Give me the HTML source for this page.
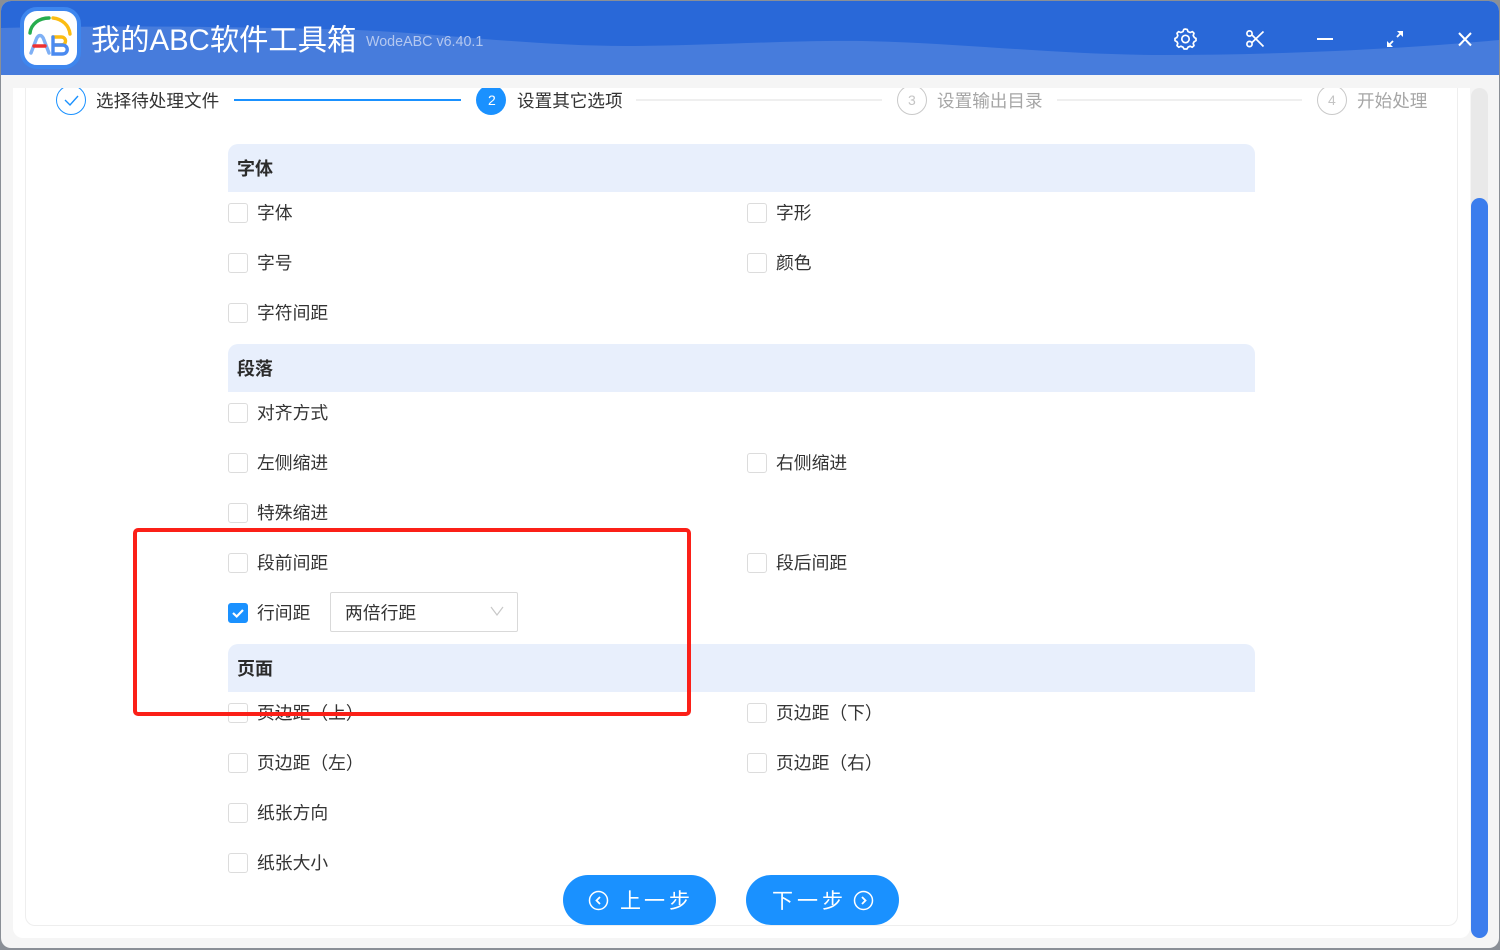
<!DOCTYPE html>
<html lang="zh-CN"><head><meta charset="utf-8"><title>我的ABC软件工具箱</title>
<style>
*{box-sizing:border-box;margin:0;padding:0}
html,body{width:1500px;height:950px;overflow:hidden;background:#8a8f96;font-family:"Liberation Sans","Noto Sans CJK SC",sans-serif;color:#333}
.abs,.t,.cb,.sec{position:absolute}
#win{position:absolute;left:1px;top:1px;width:1498px;height:947px;background:#f5f5f5;border-radius:10px;overflow:hidden}
#card{position:absolute;left:12px;top:87px;width:1457px;height:850px;background:#fff;border-radius:0 0 10px 10px}
#inner{position:absolute;left:25px;top:88px;width:1433px;height:838px;border:1px solid #eee;border-top:none;border-radius:0 0 10px 10px;background:#fff}
#page{position:absolute;left:0;top:0;width:1500px;height:950px}
.t{font-size:17.8px;line-height:24px;white-space:nowrap;color:#333}
.s{font-size:17.6px}
.g{color:#a6a6a6}
.n{font-size:14px;color:#c4c4c4}
.cb{width:20px;height:20px;border:1px solid #dcdcdc;border-radius:3px;background:#fff}
.sec{left:228px;width:1027px;height:48px;background:#e8effc;border-radius:10px 10px 0 0;font-size:18px;font-weight:bold;line-height:51px;padding-left:9px;color:#2b2b2b}
.line{position:absolute;height:2px;top:99px}
.btn{position:absolute;top:875px;width:153px;height:50px;border-radius:25px;background:#1a91ff;color:#fff;font-size:21px;line-height:53px;white-space:nowrap}
</style></head><body>
<div id="win">
 <svg class="abs" style="left:0;top:0" width="1498" height="74" viewBox="0 0 1498 74">
  <rect width="1498" height="74" fill="#2968d8"/>
  <path d="M0 27C120 24 260 26 356 29C450 33 530 45 626 45C700 45 790 39 862 40C960 42 1060 54 1161 54C1280 54 1400 48 1498 39V74H0Z" fill="#477cdc"/>
 </svg>
 <div id="card"></div>
</div>
<div id="inner"></div>
<div id="page">
 <!-- logo -->
 <div class="abs" style="left:20px;top:7px;width:61px;height:62px;border-radius:17px;background:#fff;border:4px solid #3e86ee"></div>
 <svg class="abs" style="left:20px;top:7px" width="61" height="62" viewBox="0 0 61 62" fill="none" stroke-linecap="round">
  <path d="M10 26C11 17 19 11 29 11" stroke="#27ad4e" stroke-width="3.400"/>
  <path d="M33 11C42 12 49 18 50 27" stroke="#fbbc12" stroke-width="3.400"/>
  <path d="M11 46L16 33C18 27 22 27 24 33L29 46" stroke="#7fb0f5" stroke-width="3.400"/>
  <path d="M14 39H25" stroke="#ee3030" stroke-width="3.400"/>
  <path d="M33 30H41C47 30 47 38 41 38H34" stroke="#fbbc12" stroke-width="3.400"/>
  <path d="M33 30V47H42C49 47 49 38 42 38H34" stroke="#4a8af0" stroke-width="3.400"/>
 </svg>
 <div class="t" style="left:91px;top:21px;font-size:29.300px;line-height:40px;color:#fff">我的ABC软件工具箱</div>
 <div class="t" style="left:366px;top:31px;font-size:14.300px;line-height:22px;color:#b4c8f0">WodeABC v6.40.1</div>
 <!-- window icons -->
 <svg class="abs" style="left:1170px;top:24px" width="310" height="30" viewBox="0 0 310 30" fill="none" stroke="#fff" stroke-width="1.700">
  <path d="M15 6L17.200 6.400L18 8.600L20.200 9.500L22.400 8.600L24 10.200L23.200 12.600L24.400 14.600L26 15.400V17.600L24.200 18.600L23.200 20.400L24 22.600L22.200 24.200L20.200 23.200L18 24.200L17 26H14L13 24.200L10.800 23.200L8.800 24.200L7 22.600L7.800 20.400L6.800 18.600L5 17.600V15.400L6.800 14.600L7.800 12.600L7 10.200L8.600 8.600L10.800 9.500L13 8.600L13.800 6.400Z" transform="translate(0,-1)" stroke-linejoin="round"/>
  <circle cx="15.500" cy="15" r="3.700"/>
  <circle cx="79.500" cy="9.500" r="2.600"/><circle cx="79.500" cy="20" r="2.600"/>
  <path d="M82 11L93.500 22.500M82 18.500L93.500 7.500"/>
  <path d="M147 15H163" stroke-width="2"/>
  <path d="M219 21L223 17M231 9L227 13" stroke-width="1.800"/>
  <path d="M217 23V17L223 23ZM233 7H227L233 13Z" fill="#fff" stroke="none"/>
  <path d="M289 9L301 21.500M301 9L289 21.500" stroke-width="2"/>
 </svg>

 <!-- steps -->
 <svg class="abs" style="left:40px;top:88px" width="1400" height="30" viewBox="0 0 1400 30" fill="none">
  <circle cx="31" cy="12" r="14.500" stroke="#1a91ff"/>
  <path d="M25 12L30 17L38 8" stroke="#1a91ff" stroke-width="1.400"/>
  <circle cx="451" cy="12" r="15" fill="#1a91ff"/>
  <circle cx="872" cy="12" r="14.500" stroke="#c9c9c9"/>
  <circle cx="1292" cy="12" r="14.500" stroke="#c9c9c9"/>
 </svg>
 <div class="t s" style="left:96px;top:89px">选择待处理文件</div>
 <div class="line" style="left:234px;width:227px;background:#1a91ff"></div>
 <div class="t" style="left:488px;top:88px;font-size:14px;color:#fff">2</div>
 <div class="t s" style="left:517px;top:89px">设置其它选项</div>
 <div class="line" style="left:636px;width:246px;background:#efefef"></div>
 <div class="t n" style="left:908px;top:88px">3</div>
 <div class="t g s" style="left:937px;top:89px">设置输出目录</div>
 <div class="line" style="left:1057px;width:245px;background:#efefef"></div>
 <div class="t n" style="left:1328px;top:88px">4</div>
 <div class="t g s" style="left:1357px;top:89px">开始处理</div>

 <!-- sections -->
 <div class="sec" style="top:144px">字体</div>
 <div class="cb" style="left:228px;top:203px"></div><div class="t" style="left:257px;top:201px">字体</div>
 <div class="cb" style="left:747px;top:203px"></div><div class="t" style="left:776px;top:201px">字形</div>
 <div class="cb" style="left:228px;top:253px"></div><div class="t" style="left:257px;top:251px">字号</div>
 <div class="cb" style="left:747px;top:253px"></div><div class="t" style="left:776px;top:251px">颜色</div>
 <div class="cb" style="left:228px;top:303px"></div><div class="t" style="left:257px;top:301px">字符间距</div>

 <div class="sec" style="top:344px">段落</div>
 <div class="cb" style="left:228px;top:403px"></div><div class="t" style="left:257px;top:401px">对齐方式</div>
 <div class="cb" style="left:228px;top:453px"></div><div class="t" style="left:257px;top:451px">左侧缩进</div>
 <div class="cb" style="left:747px;top:453px"></div><div class="t" style="left:776px;top:451px">右侧缩进</div>
 <div class="cb" style="left:228px;top:503px"></div><div class="t" style="left:257px;top:501px">特殊缩进</div>
 <div class="cb" style="left:228px;top:553px"></div><div class="t" style="left:257px;top:551px">段前间距</div>
 <div class="cb" style="left:747px;top:553px"></div><div class="t" style="left:776px;top:551px">段后间距</div>
 <div class="cb" style="left:228px;top:603px;background:#1a91ff;border-color:#1a91ff"></div>
 <svg class="abs" style="left:228px;top:603px" width="20" height="20" viewBox="0 0 20 20" fill="none"><path d="M5 10L8.700 13.500L15 7" stroke="#fff" stroke-width="2.200"/></svg>
 <div class="t" style="left:257px;top:601px">行间距</div>
 <div class="abs" style="left:330px;top:592px;width:188px;height:40px;border:1px solid #d9d9d9;border-radius:2px;background:#fff"></div>
 <div class="t" style="left:345px;top:601px">两倍行距</div>
 <svg class="abs" style="left:488px;top:605px" width="18" height="14" viewBox="0 0 18 14" fill="none"><path d="M3 2L9 10L15 2" stroke="#c8c8c8" stroke-width="1.200"/></svg>

 <div class="sec" style="top:644px">页面</div>
 <div class="cb" style="left:228px;top:703px"></div><div class="t" style="left:257px;top:701px">页边距（上）</div>
 <div class="cb" style="left:747px;top:703px"></div><div class="t" style="left:776px;top:701px">页边距（下）</div>
 <div class="cb" style="left:228px;top:753px"></div><div class="t" style="left:257px;top:751px">页边距（左）</div>
 <div class="cb" style="left:747px;top:753px"></div><div class="t" style="left:776px;top:751px">页边距（右）</div>
 <div class="cb" style="left:228px;top:803px"></div><div class="t" style="left:257px;top:801px">纸张方向</div>
 <div class="cb" style="left:228px;top:853px"></div><div class="t" style="left:257px;top:851px">纸张大小</div>

 <!-- red box -->
 <div class="abs" style="left:133px;top:528px;width:558px;height:188px;border:4px solid #fb2018;border-radius:5px"></div>

 <!-- buttons -->
 <div class="btn" style="left:563px"><span class="abs" style="left:57px;top:0">上</span><span class="abs" style="left:81px;top:0">一</span><span class="abs" style="left:106px;top:0">步</span>
  <svg class="abs" style="left:25px;top:15px" width="21" height="21" viewBox="0 0 21 21" fill="none" stroke="#fff" stroke-width="1.500"><circle cx="10.500" cy="10.500" r="9"/><path d="M12 7L8.500 10.500L12 14" stroke-width="1.800"/></svg></div>
 <div class="btn" style="left:746px"><span class="abs" style="left:26px;top:0">下</span><span class="abs" style="left:51px;top:0">一</span><span class="abs" style="left:76px;top:0">步</span>
  <svg class="abs" style="left:107px;top:15px" width="21" height="21" viewBox="0 0 21 21" fill="none" stroke="#fff" stroke-width="1.500"><circle cx="10.500" cy="10.500" r="9"/><path d="M9 7L12.500 10.500L9 14" stroke-width="1.800"/></svg></div>

 <!-- scrollbar -->
 <div class="abs" style="left:1471px;top:88px;width:17px;height:850px;background:#e9e9e9;border-radius:9px"></div>
 <div class="abs" style="left:1471px;top:198px;width:17px;height:740px;background:#3b7ded;border-radius:9px"></div>
</div>
</body></html>
